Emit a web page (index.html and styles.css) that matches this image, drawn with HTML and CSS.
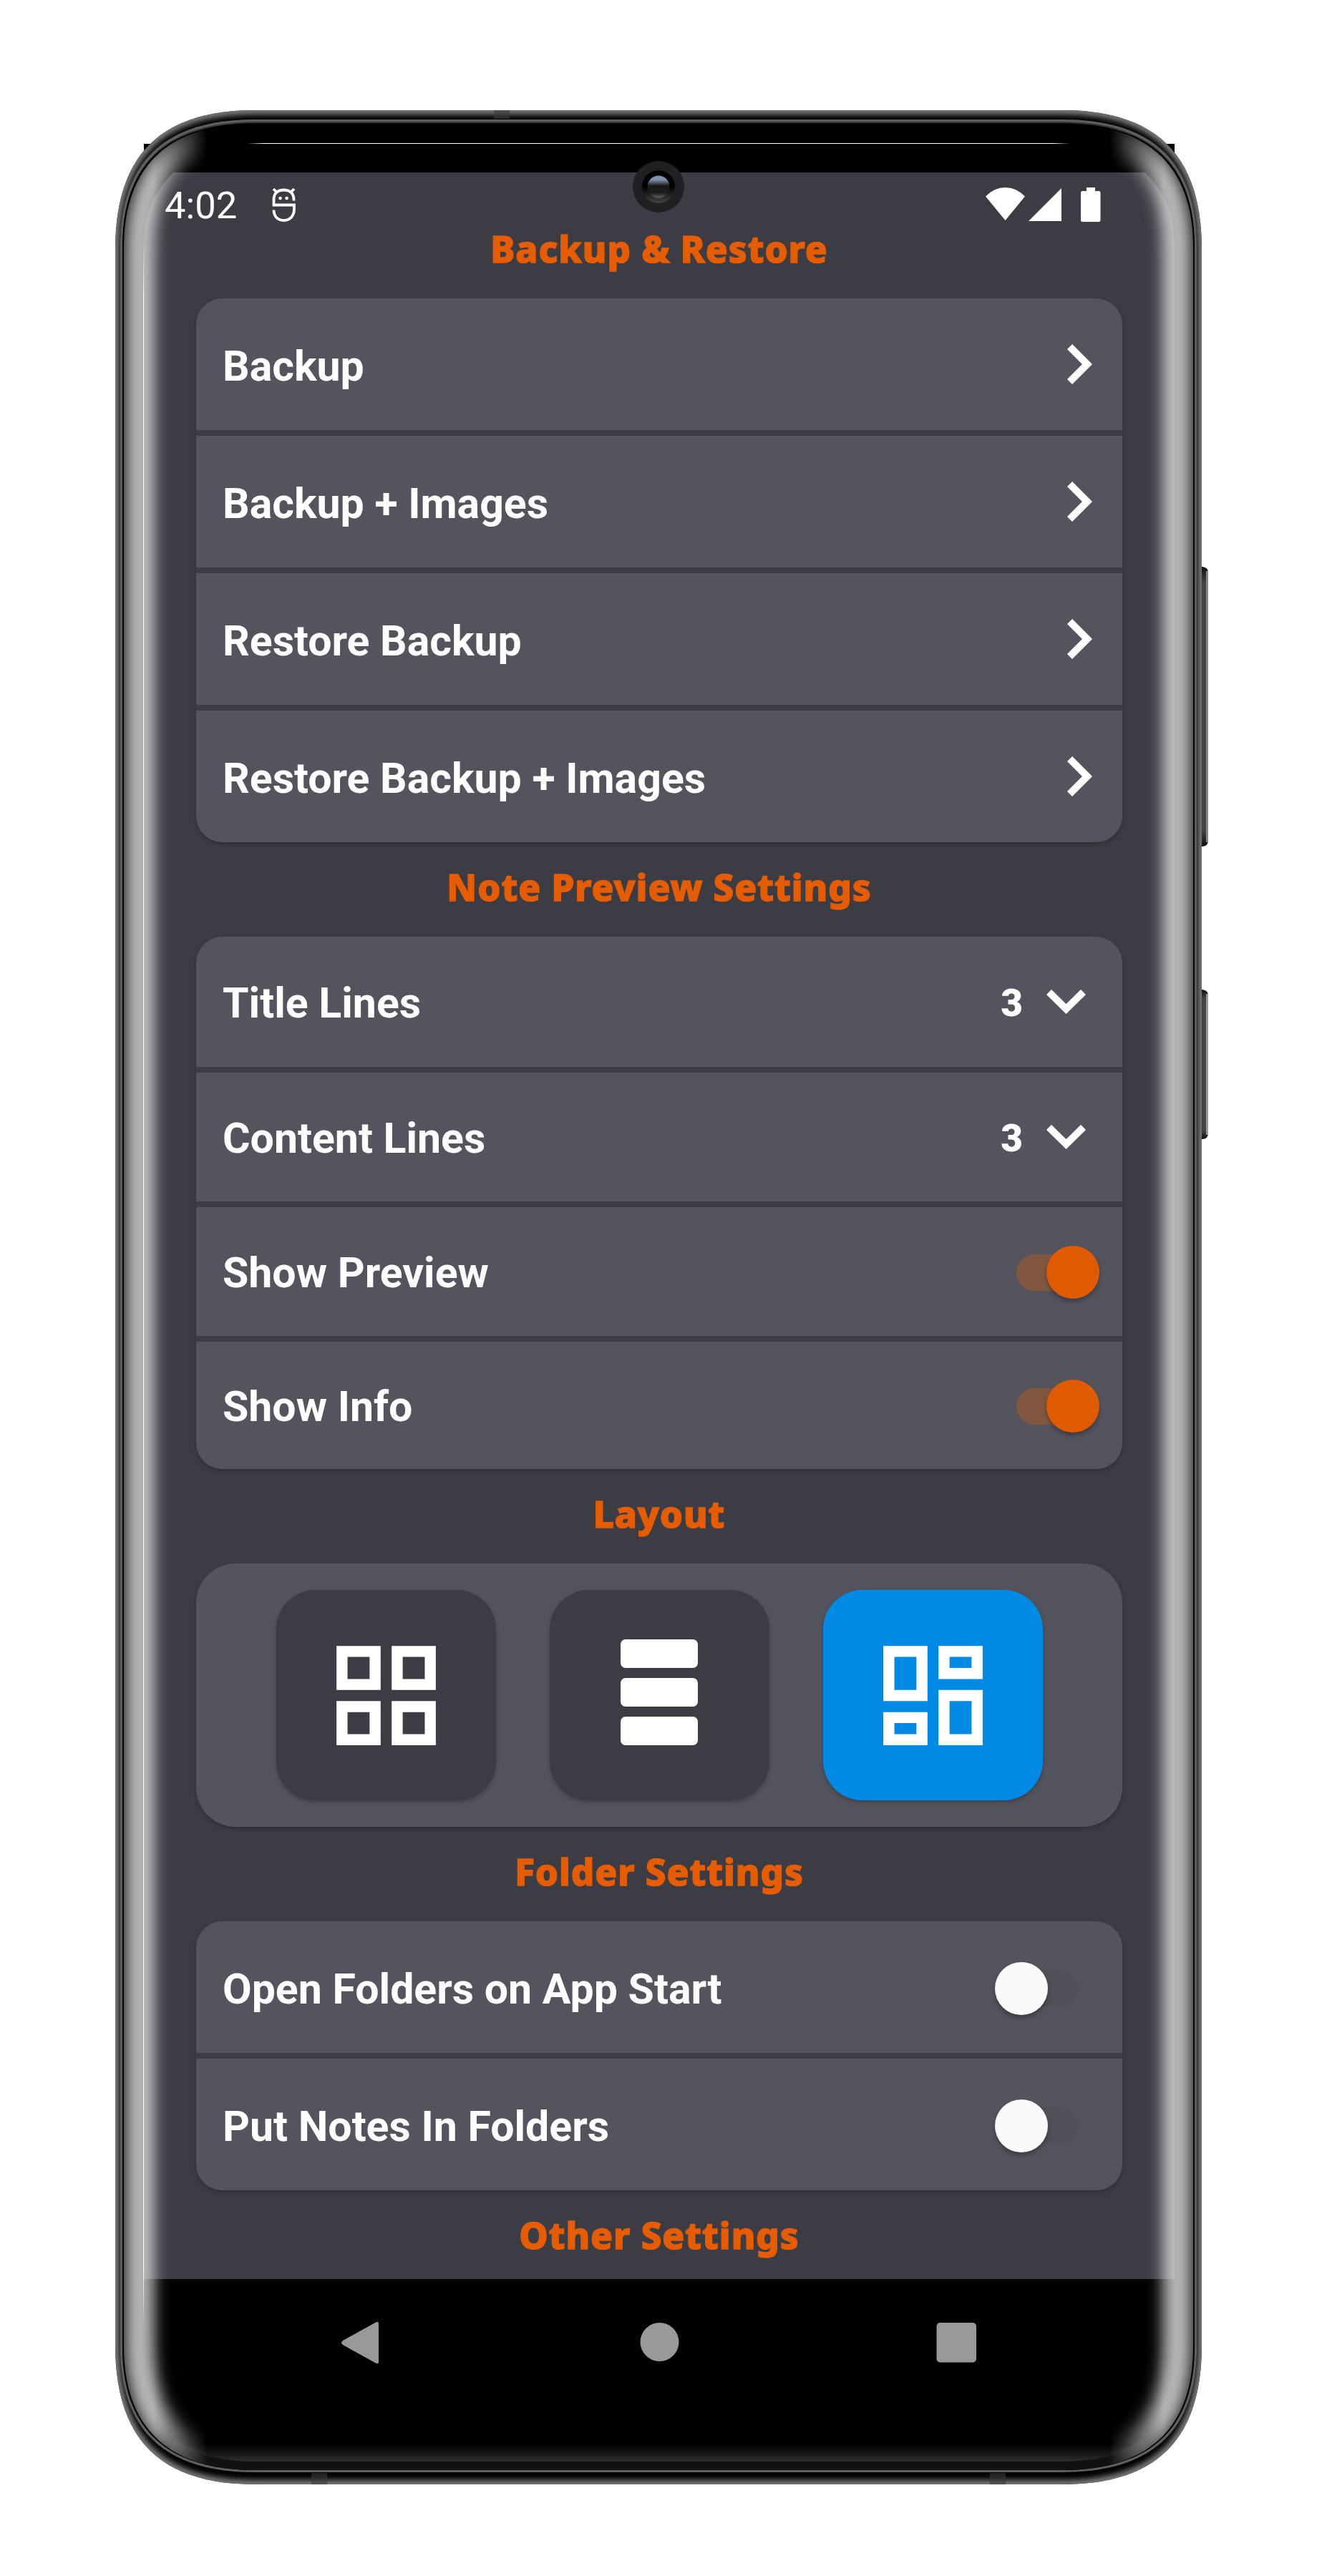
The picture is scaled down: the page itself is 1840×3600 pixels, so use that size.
FILE: index.html
```
<!DOCTYPE html>
<html lang="en">
<head>
<meta charset="utf-8">
<title>Settings</title>
<link rel="stylesheet" href="styles.css">
</head>
<body>
<main class="stage">
  <svg class="phone-body" width="1840" height="3600" viewBox="0 0 1840 3600" aria-hidden="true">
    <defs>
      <path id="outer" d="M161 349C161 217 224 154 356 154H1484C1616 154 1679 217 1679 349V3277C1679 3409 1616 3472 1484 3472H356C224 3472 161 3409 161 3277Z"/>
      <clipPath id="outerClip"><use href="#outer"/></clipPath>
      <filter id="rimBlur" x="-5%" y="-5%" width="110%" height="110%"><feGaussianBlur stdDeviation="4"/></filter>
      <linearGradient id="button" x1="0" x2="0" y1="0" y2="1"><stop offset="0" stop-color="#111"/><stop offset=".06" stop-color="#444"/><stop offset=".94" stop-color="#444"/><stop offset="1" stop-color="#111"/></linearGradient>
    </defs>
    <path d="M1676 792h4q8 1 8 8v375q0 7-8 8h-4z" fill="url(#button)"/>
    <path d="M1685 798h3v379h-3z" fill="#868686"/>
    <path d="M1676 1383h4q8 1 8 8v193q0 7-8 8h-4z" fill="url(#button)"/>
    <path d="M1685 1389h3v197h-3z" fill="#999"/>
    <path d="M201 201h1440v30H201z"/>
    <use href="#outer"/>
    <g clip-path="url(#outerClip)"><use href="#outer" fill="none" stroke="#8a8a8a" stroke-width="11" filter="url(#rimBlur)"/></g>
    <path d="M690 154h22v12h-22zM435 3456h22v16h-22zM1383 3456h22v16h-22z" fill="#3a3a3a" opacity=".6"/>
    <path d="M168 345C168 224 232 167 356 167H1484C1608 167 1672 224 1672 345V3280C1672 3398 1608 3455 1484 3455H356C232 3455 168 3398 168 3280Z" fill="#5f5f5f"/>
    <path d="M171 345C171 227 234 170 356 170H1484C1606 170 1669 227 1669 345V3280C1669 3395 1606 3452 1484 3452H356C234 3452 171 3395 171 3280Z" fill="#3a3a3a"/>
    <path d="M171 345C171 229 234 172 356 172H1484C1606 172 1669 229 1669 345V3280C1669 3395 1606 3452 1484 3452H356C234 3452 171 3395 171 3280Z"/>
  </svg>

  <section class="screen">
    <div class="bezel"></div>
    <header class="status">
      <span class="clock">4:02</span>
      <svg class="mark" width="34" height="50" viewBox="0 0 34 50" fill="none" stroke="#fff" stroke-width="3.800">
        <path d="M2 2l5 5M31 2l-5 5M30.500 18.500V17C30.500 8 25 3.500 16.500 3.500S2.500 8 2.500 17v7.500H31V30C31 40 25 46 16.500 46S2.500 40 2.500 31.500"/>
        <path d="M11.500 15h.1M20.500 15h.1" stroke-width="4.500" stroke-linecap="round"/>
      </svg>
      <svg class="signals" width="161" height="50" viewBox="0 0 161 50" fill="#fff">
        <path d="M0 12.500Q12 0 27.500 0T55 12.500L27.500 46zM106 1v46H60zM141 0h12v5h5q2.500 0 2.500 2.500v38q0 2.500-2.500 2.500h-22.500q-2.500 0-2.500-2.500V7.500q0-2.500 2.500-2.500h5.500z"/>
      </svg>
    </header>

    <div class="settings">
      <h2>Backup &amp; Restore</h2>
      <ul class="card">
        <li><span>Backup</span><svg class="go" viewBox="0 0 35 56"><path d="M3.500 3.500L28 28 3.500 52.500"/></svg></li>
        <li><span>Backup + Images</span><svg class="go" viewBox="0 0 35 56"><path d="M3.500 3.500L28 28 3.500 52.500"/></svg></li>
        <li><span>Restore Backup</span><svg class="go" viewBox="0 0 35 56"><path d="M3.500 3.500L28 28 3.500 52.500"/></svg></li>
        <li><span>Restore Backup + Images</span><svg class="go" viewBox="0 0 35 56"><path d="M3.500 3.500L28 28 3.500 52.500"/></svg></li>
      </ul>

      <h2>Note Preview Settings</h2>
      <ul class="card preview">
        <li><span>Title Lines</span><b>3</b><svg class="drop" viewBox="0 0 55 34"><path d="M3.500 3.500l24 23.500 24-23.500"/></svg></li>
        <li><span>Content Lines</span><b>3</b><svg class="drop" viewBox="0 0 55 34"><path d="M3.500 3.500l24 23.500 24-23.500"/></svg></li>
        <li><span>Show Preview</span><i class="switch on"></i></li>
        <li><span>Show Info</span><i class="switch on"></i></li>
      </ul>

      <h2>Layout</h2>
      <div class="card tiles">
        <button><svg width="185" height="185" viewBox="0 0 24 24"><path fill-rule="evenodd" d="M3 3h8v8H3zm2 2v4h4V5zM13 3h8v8h-8zm2 2v4h4V5zM3 13h8v8H3zm2 2v4h4v-4zM13 13h8v8h-8zm2 2v4h4v-4z"/></svg></button>
        <button><svg class="rows" width="108" height="148" viewBox="0 0 108 148"><rect width="108" height="40" rx="7"/><rect y="54" width="108" height="40" rx="7"/><rect y="108" width="108" height="40" rx="7"/></svg></button>
        <button class="active"><svg width="185" height="185" viewBox="0 0 24 24"><path fill-rule="evenodd" d="M3 3h8v10H3zm2 2v6h4V5zM13 3h8v6h-8zm2 2v2h4V5zM3 15h8v6H3zm2 2v2h4v-2zM13 11h8v10h-8zm2 2v6h4v-6z"/></svg></button>
      </div>

      <h2>Folder Settings</h2>
      <ul class="card">
        <li><span>Open Folders on App Start</span><i class="switch"></i></li>
        <li><span>Put Notes In Folders</span><i class="switch"></i></li>
      </ul>

      <h2>Other Settings</h2>
    </div>

    <nav class="keys">
      <svg width="888" height="60" viewBox="0 0 888 60" fill="#999">
        <path d="M2 27L48 1.500q4-2 4 2v53q0 4-4 2L2 33q-4-3 0-6z"/>
        <circle cx="444.500" cy="29" r="27"/>
        <rect x="831.500" y="2" width="55.500" height="55.500" rx="5"/>
      </svg>
    </nav>
  </section>

  <svg class="glass" width="1840" height="3600" viewBox="0 0 1840 3600" aria-hidden="true">
    <defs>
      <clipPath id="innerClip"><path d="M173 345C173 232 236 173 356 173H1484C1604 173 1667 232 1667 345V3280C1667 3393 1604 3452 1484 3452H356C236 3452 173 3393 173 3280Z"/></clipPath>
      <filter id="glow" filterUnits="userSpaceOnUse" x="100" y="100" width="1640" height="3450"><feGaussianBlur stdDeviation="11"/></filter>
      <linearGradient id="sides" gradientUnits="userSpaceOnUse" x1="161" x2="1679" y1="0" y2="0"><stop offset=".035" stop-color="#fff"/><stop offset=".085" stop-color="#000"/><stop offset=".915" stop-color="#000"/><stop offset=".965" stop-color="#fff"/></linearGradient>
      <mask id="sideMask" maskUnits="userSpaceOnUse" x="0" y="0" width="1840" height="3600"><path d="M0 0h1840v3600H0z" fill="url(#sides)"/></mask>
      <linearGradient id="chin" x1="0" x2="0" y1="0" y2="1"><stop stop-color="#2e2e2e" stop-opacity="0"/><stop offset="1" stop-color="#2e2e2e"/></linearGradient>
      <linearGradient id="lens" x1="0" x2="0" y1="0" y2="1"><stop offset="0" stop-color="#8496b4"/><stop offset=".2" stop-color="#7d8ba4"/><stop offset=".45" stop-color="#1a1718"/><stop offset=".78" stop-color="#1c1a1a"/><stop offset="1" stop-color="#666"/></linearGradient>
      <linearGradient id="ring" x1="0" x2="0" y1="0" y2="1"><stop offset=".5" stop-color="#020204"/><stop offset="1" stop-color="#444"/></linearGradient>
      <linearGradient id="slit" gradientUnits="userSpaceOnUse" x1="345" x2="1495" y1="0" y2="0"><stop stop-color="#fff" stop-opacity="0"/><stop offset=".02" stop-color="#fff"/><stop offset=".98" stop-color="#fff"/><stop offset="1" stop-color="#fff" stop-opacity="0"/></linearGradient>
      <linearGradient id="edge" gradientUnits="userSpaceOnUse" x1="0" x2="0" y1="330" y2="3255"><stop stop-color="#fff" stop-opacity="0"/><stop offset=".03" stop-color="#fff"/><stop offset=".97" stop-color="#fff"/><stop offset="1" stop-color="#fff" stop-opacity="0"/></linearGradient>
    </defs>
    <g clip-path="url(#innerClip)">
      <path d="M245 3408Q285 3440 356 3440H1484Q1555 3440 1595 3408L1620 3452H220Z" fill="#111"/>
      <path d="M256 3417H1584Q1548 3440 1484 3440H356Q292 3440 256 3417Z" fill="url(#chin)"/>
      <g mask="url(#sideMask)">
        <path d="M356 185C246 185 195 240 195 350V3275C195 3385 246 3440 356 3440M1484 185C1594 185 1645 240 1645 350V3275C1645 3385 1594 3440 1484 3440" fill="none" stroke="#ddd" stroke-width="42" opacity=".84" filter="url(#glow)"/>
      </g>
    </g>
    <path d="M200 330h1v2925h-1z" fill="url(#edge)"/>
    <path d="M345 200h1150v1H345z" fill="url(#slit)"/>
    <circle cx="920" cy="261" r="36" fill="#202022"/>
    <circle cx="920" cy="261" r="23" fill="url(#ring)"/>
    <circle cx="920" cy="261" r="15.500" fill="url(#lens)"/>
  </svg>
</main>
</body>
</html>
```
FILE: styles.css
```
* { box-sizing: border-box; }

body {
  margin: 0;
  background: #fff;
  font-family: Roboto, "Liberation Sans", sans-serif;
  color: #fff;
}

.stage {
  position: relative;
  width: 1840px;
  height: 3600px;
  padding: 201px 199px 0 201px;
  overflow: hidden;
}

/* hardware drawn under and over the display */
.phone-body, .glass {
  position: absolute;
  inset: 0;
}

.glass { pointer-events: none; }

.screen {
  position: relative;
  display: flex;
  flex-direction: column;
  width: 1440px;
  height: 3200px;
  background: linear-gradient(#3c3c44 2984px, #000 2984px);
  clip-path: path("M0 144C0 95 12 72 41 40H1399C1428 72 1440 95 1440 144V2984H1380V3200H60V2984H0Z");
}

.bezel { height: 40px; background: #000; }

.status {
  display: flex;
  align-items: flex-start;
  height: 44px;
  padding: 21px 103px 0 29px;
}

.clock { width: 150px; font-size: 52.5px; line-height: 51px; white-space: nowrap; }
.status svg { flex: none; }
.signals { margin-left: auto; }

.settings {
  height: 2900px;
  padding: 0 73px;
}

h2 {
  height: 132px;
  margin: 0;
  font: 800 51px/124px "Noto Sans", sans-serif;
  letter-spacing: 1px;
  text-align: center;
  color: #e65c00;
  -webkit-text-stroke: 1.5px #e65c00;
  white-space: nowrap;
}

.card {
  margin: 0;
  padding: 0;
  list-style: none;
  display: flex;
  flex-direction: column;
  gap: 8px;
  border-radius: 37px;
  overflow: hidden;
  background: #3c3c44;
  box-shadow: 0 3px 6px rgba(0, 0, 0, .22);
}

.card li {
  display: flex;
  align-items: center;
  height: 184px;
  padding: 0 42px 0 37px;
  background: #54545e;
  font-size: 59px;
  font-weight: 700;
}

.card li span { margin-right: auto; padding-top: 4px; white-space: nowrap; }
.card b { font-size: 53px; padding-top: 4px; }

.preview li { height: 180px; }
.preview li:first-child { height: 181.5px; }
.preview li:last-child { height: 178.5px; }

.go, .drop { fill: none; stroke: #fff; stroke-width: 10; }
.go { width: 35px; height: 56px; }
.drop { width: 55px; height: 34px; margin: 0 9px 0 33px; }

.switch {
  display: flex;
  align-items: center;
  width: 116px;
  height: 51px;
  margin: 3px 20px 0 0;
  border-radius: 26px;
  background: #514f58;
}

.switch::before {
  content: "";
  width: 74px;
  height: 74px;
  flex: none;
  border-radius: 50%;
  background: #fafafa;
  box-shadow: 0 4px 6px rgba(0, 0, 0, .3);
}

.switch.on {
  justify-content: flex-end;
  margin-right: -10px;
  background: #81583f;
}

.switch.on::before { background: #e05a00; }

.tiles {
  flex-direction: row;
  justify-content: center;
  align-items: center;
  gap: 75px;
  height: 368px;
  border-radius: 55px;
  background: #54545e;
}

.tiles button {
  display: flex;
  align-items: center;
  justify-content: center;
  width: 307px;
  height: 294px;
  padding: 0;
  border: 0;
  border-radius: 55px;
  background: #3c3c44;
  box-shadow: 0 3px 6px rgba(0, 0, 0, .25);
}

.tiles .active { background: #008ae6; }
.tiles svg { fill: #fff; }
.tiles .rows { margin-bottom: 8px; }

.keys {
  display: flex;
  justify-content: center;
  flex: 1;
  padding-top: 59px;
}
```
